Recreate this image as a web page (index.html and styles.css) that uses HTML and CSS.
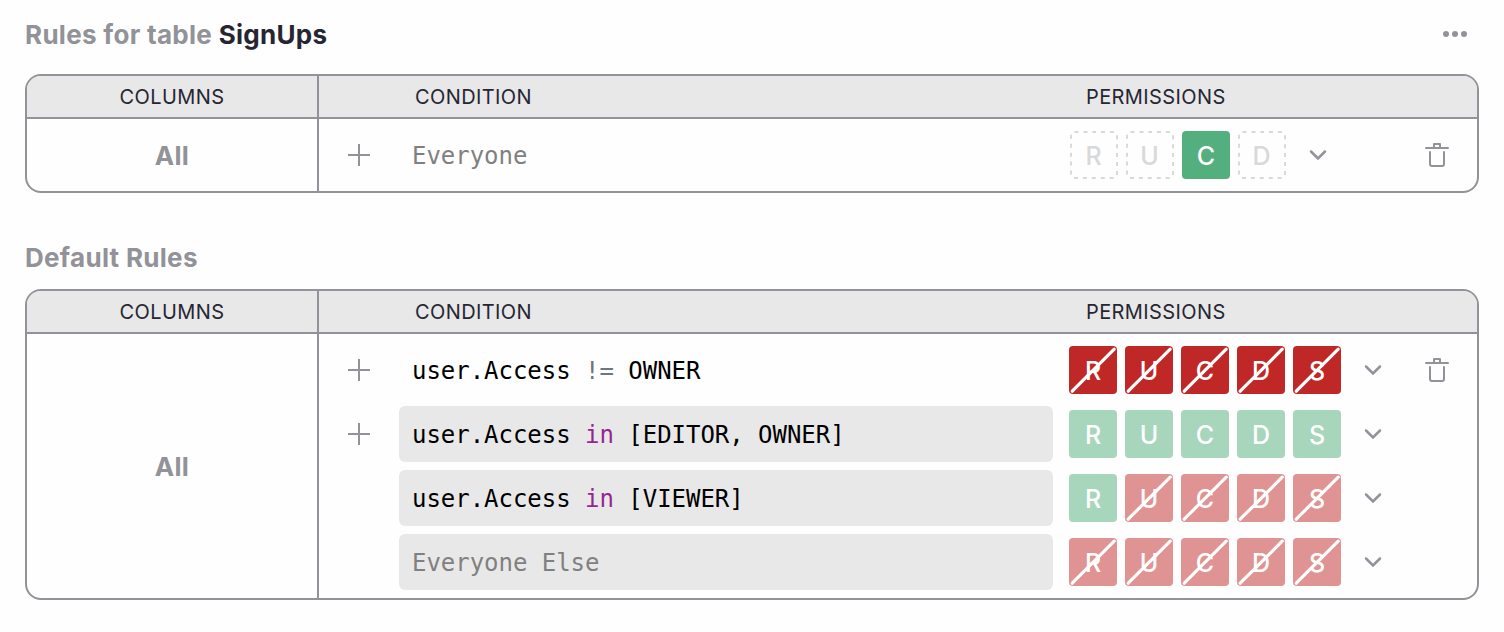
FILE: index.html
```
<!DOCTYPE html>
<html lang="en">
<head>
<meta charset="utf-8">
<title>Access Rules</title>
<link rel="stylesheet" href="styles.css">
</head>
<body>
<svg class="sprite" aria-hidden="true">
  <symbol id="plus" viewBox="0 0 22 22"><path d="M11 0V22M0 11H22" fill="none" stroke="currentColor" stroke-width="2"/></symbol>
  <symbol id="chevron" viewBox="0 0 18 12"><path d="M2 2.5L9 9.5L16 2.5" fill="none" stroke="currentColor" stroke-width="2.5" stroke-linecap="round"/></symbol>
  <symbol id="trash" viewBox="0 0 24 24"><path d="M1 5H23M9 5V1H15V5M5 9V21Q5 23 7 23H17Q19 23 19 21V9" fill="none" stroke="currentColor" stroke-width="2" stroke-linecap="round" stroke-linejoin="round"/></symbol>
  <symbol id="dots" viewBox="0 0 24 6"><g fill="currentColor"><circle cx="3" cy="3" r="3"/><circle cx="12" cy="3" r="3"/><circle cx="21" cy="3" r="3"/></g></symbol>
  <symbol id="slash" viewBox="0 0 48 48"><path d="M3.2 45.2L45.2 3.2" stroke="#fff" stroke-width="3.2" stroke-linecap="round"/></symbol>
  <symbol id="dashes" viewBox="0 0 48 48"><path d="M24 1H44A3 3 0 0 1 47 4V44A3 3 0 0 1 44 47H4A3 3 0 0 1 1 44V4A3 3 0 0 1 4 1Z" fill="none" stroke="#d9d9d9" stroke-width="2" stroke-dasharray="4 4.94" stroke-dashoffset="2"/></symbol>
</svg>
<main class="page">
  <section class="rules">
    <div class="title"><h2>Rules for table <b>SignUps</b></h2><svg class="dots"><use href="#dots"/></svg></div>
    <div class="table">
      <div class="head"><span class="h-col">COLUMNS</span><span class="h-cond">CONDITION</span><span class="h-perm">PERMISSIONS</span></div>
      <div class="body">
        <div class="scope">All</div>
        <div class="rows">
          <div class="row">
            <svg class="plus"><use href="#plus"/></svg>
            <div class="formula muted">Everyone</div>
            <div class="perms four"><i class="bit unset">R<svg class="slash"><use href="#dashes"/></svg></i><i class="bit unset">U<svg class="slash"><use href="#dashes"/></svg></i><i class="bit allow">C</i><i class="bit unset">D<svg class="slash"><use href="#dashes"/></svg></i></div>
            <svg class="chevron"><use href="#chevron"/></svg>
            <svg class="trash"><use href="#trash"/></svg>
          </div>
        </div>
      </div>
    </div>
  </section>
  <section class="rules">
    <div class="title"><h2>Default Rules</h2></div>
    <div class="table">
      <div class="head"><span class="h-col">COLUMNS</span><span class="h-cond">CONDITION</span><span class="h-perm">PERMISSIONS</span></div>
      <div class="body">
        <div class="scope">All</div>
        <div class="rows">
          <div class="row">
            <svg class="plus"><use href="#plus"/></svg>
            <div class="formula">user.Access <span class="op">!=</span> OWNER</div>
            <div class="perms"><i class="bit deny">R<svg class="slash"><use href="#slash"/></svg></i><i class="bit deny">U<svg class="slash"><use href="#slash"/></svg></i><i class="bit deny">C<svg class="slash"><use href="#slash"/></svg></i><i class="bit deny">D<svg class="slash"><use href="#slash"/></svg></i><i class="bit deny">S<svg class="slash"><use href="#slash"/></svg></i></div>
            <svg class="chevron"><use href="#chevron"/></svg>
            <svg class="trash"><use href="#trash"/></svg>
          </div>
          <div class="row">
            <svg class="plus"><use href="#plus"/></svg>
            <div class="formula locked">user.Access <span class="kw">in</span> [EDITOR, OWNER]</div>
            <div class="perms"><i class="bit allow soft">R</i><i class="bit allow soft">U</i><i class="bit allow soft">C</i><i class="bit allow soft">D</i><i class="bit allow soft">S</i></div>
            <svg class="chevron"><use href="#chevron"/></svg>
          </div>
          <div class="row">
            <span class="plus"></span>
            <div class="formula locked">user.Access <span class="kw">in</span> [VIEWER]</div>
            <div class="perms"><i class="bit allow soft">R</i><i class="bit deny soft">U<svg class="slash"><use href="#slash"/></svg></i><i class="bit deny soft">C<svg class="slash"><use href="#slash"/></svg></i><i class="bit deny soft">D<svg class="slash"><use href="#slash"/></svg></i><i class="bit deny soft">S<svg class="slash"><use href="#slash"/></svg></i></div>
            <svg class="chevron"><use href="#chevron"/></svg>
          </div>
          <div class="row">
            <span class="plus"></span>
            <div class="formula locked muted">Everyone Else</div>
            <div class="perms"><i class="bit deny soft">R<svg class="slash"><use href="#slash"/></svg></i><i class="bit deny soft">U<svg class="slash"><use href="#slash"/></svg></i><i class="bit deny soft">C<svg class="slash"><use href="#slash"/></svg></i><i class="bit deny soft">D<svg class="slash"><use href="#slash"/></svg></i><i class="bit deny soft">S<svg class="slash"><use href="#slash"/></svg></i></div>
            <svg class="chevron"><use href="#chevron"/></svg>
          </div>
        </div>
      </div>
    </div>
  </section>
</main>
</body>
</html>
```
FILE: styles.css
```
* { box-sizing: border-box; }
body { margin: 0; background: #fefefe; font-family: Inter, "Liberation Sans", sans-serif; color: #262633; }
svg { display: block; flex: none; color: #929299; }
.sprite { width: 0; height: 0; position: absolute; }
.page { padding: 15px 25px 0; display: flex; flex-direction: column; gap: 45px; }
.title { display: flex; justify-content: space-between; align-items: center; height: 40px; padding-right: 12px; margin-bottom: 19px; }
.rules + .rules .title { margin-bottom: 11px; }
h2 { margin: 0 0 2px; font-size: 26px; font-weight: 700; letter-spacing: 0.3px; color: #929299; white-space: nowrap; }
h2 b { font-weight: 700; color: #262633; }
.dots { width: 24px; height: 6px; margin-bottom: 2px; }
.table { border: 2px solid #929299; border-radius: 16px; overflow: hidden; }
.head { display: flex; height: 43px; line-height: 43px; background: #e8e8e8; border-bottom: 2px solid #929299; font-size: 20px; letter-spacing: 0.4px; }
.h-col { width: 292px; height: 41px; border-right: 2px solid #929299; text-align: center; }
.h-cond { width: 671px; padding-left: 96px; }
.h-perm { padding-left: 96px; }
.body { display: flex; }
.scope { width: 292px; border-right: 2px solid #929299; display: flex; align-items: center; justify-content: center; font-size: 26px; font-weight: 700; letter-spacing: 0.3px; color: #929299; }
.rows { flex: 1; padding: 4px 0; }
.row { display: flex; align-items: center; height: 64px; padding: 0 28px 0 29px; }
.plus { width: 22px; height: 22px; flex: none; margin-right: 29px; }
.formula { width: 654px; height: 56px; line-height: 58px; padding-left: 13px; border-radius: 6px; font-family: "DejaVu Sans Mono", monospace; font-size: 24px; letter-spacing: -0.03px; color: #000; white-space: pre; }
.locked { background: #e8e8e8; }
.muted { color: #808080; }
.op { color: #687687; }
.kw { color: #93278f; }
.perms { display: flex; gap: 8px; margin: 0 23px 0 16px; }
.four { margin-left: 17px; }
.bit { position: relative; width: 48px; height: 48px; border-radius: 4px; line-height: 50px; text-align: center; font-style: normal; font-size: 25px; font-weight: 500; color: #fff; }
.unset { color: #d9d9d9; }
.four .bit { right: 0.5px; }
.four .allow { right: 0; }
.allow { background: #53b07e; }
.deny { background: #c02828; }
.allow.soft { background: #a7d6bc; }
.deny.soft { background: #df9392; }
.slash { position: absolute; inset: 0; width: 48px; height: 48px; }
.chevron { width: 18px; height: 12px; }
.trash { width: 24px; height: 24px; margin-left: auto; }
```
